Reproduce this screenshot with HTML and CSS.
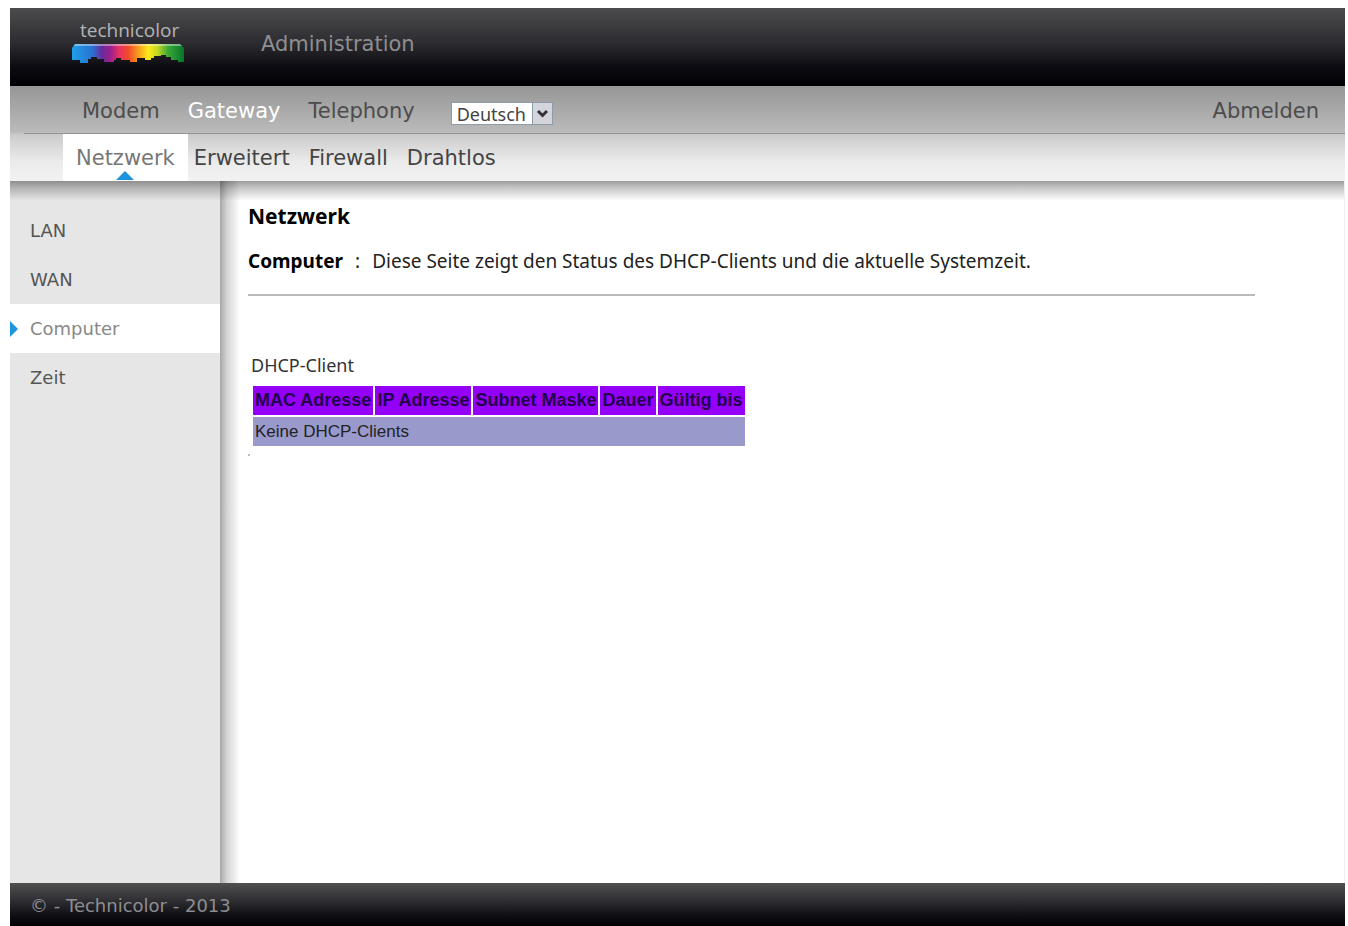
FILE: index.html
```html
<!DOCTYPE html>
<html lang="de">
<head>
    <meta charset="UTF-8">
    <meta name="viewport" content="width=device-width, initial-scale=1.0">
    <title>Technicolor - Netzwerk</title>
    <link rel="stylesheet" href="styles.css">
</head>
<body>
    <header class="header">
        <svg class="logo" width="116" height="50" viewBox="0 -6 116 50" role="img" aria-label="technicolor">
            <defs>
                <linearGradient id="rainbow">
                    <stop offset="0" stop-color="#1fa0e8"/>
                    <stop offset="0.18" stop-color="#2a72d0"/>
                    <stop offset="0.27" stop-color="#6a2a9c"/>
                    <stop offset="0.34" stop-color="#98208c"/>
                    <stop offset="0.42" stop-color="#e83068"/>
                    <stop offset="0.5" stop-color="#f04a28"/>
                    <stop offset="0.58" stop-color="#f89020"/>
                    <stop offset="0.68" stop-color="#fcea18"/>
                    <stop offset="0.76" stop-color="#c8d820"/>
                    <stop offset="0.86" stop-color="#38a838"/>
                    <stop offset="1" stop-color="#08742c"/>
                </linearGradient>
            </defs>
            <text class="logo-text" x="10" y="17">technicolor</text>
            <path fill="url(#rainbow)" d="M5 24H110L114 28V42H108V40H101V37H96V35H91V36H84V38H81V40H75V38H67V42H60V40H51V38H46V40H44V42H34V39H27V37H21V39H18V43H10V40H2V28Z"/>
            <path fill="#fff" opacity="0.4" d="M5 24H110L112 26H4Z"/>
        </svg>
        <span class="header-title">Administration</span>
    </header>

    <div class="nav">
        <nav class="main-nav">
            <a href="#">Modem</a>
            <a href="#" class="active">Gateway</a>
            <a href="#">Telephony</a>
            <div class="language">
                <select aria-label="Sprache">
                    <option>Deutsch</option>
                </select>
                <svg class="language-arrow" width="20" height="21" viewBox="0 0 20 21">
                    <rect width="20" height="21" fill="#d4d4dc"/>
                    <path d="M0 0V21" stroke="#8d9da8" stroke-width="2"/>
                    <path d="M6 8L10.500 12.500L15 8" fill="none" stroke="#333" stroke-width="3"/>
                </svg>
            </div>
            <a href="#" class="logout">Abmelden</a>
        </nav>
        <nav class="sub-nav">
            <a href="#" class="active">Netzwerk</a>
            <a href="#">Erweitert</a>
            <a href="#">Firewall</a>
            <a href="#">Drahtlos</a>
        </nav>
    </div>

    <div class="main">
        <nav class="sidebar">
            <a href="#">LAN</a>
            <a href="#">WAN</a>
            <a href="#" class="active">Computer</a>
            <a href="#">Zeit</a>
        </nav>
        <main class="content">
            <h1>Netzwerk</h1>
            <p class="description"><strong>Computer</strong><span class="colon">:</span>Diese Seite zeigt den Status des DHCP-Clients und die aktuelle Systemzeit.</p>
            <hr>
            <table class="clients">
                <caption>DHCP-Client</caption>
                <thead>
                    <tr>
                        <th>MAC Adresse</th>
                        <th>IP Adresse</th>
                        <th>Subnet Maske</th>
                        <th>Dauer</th>
                        <th>Gültig bis</th>
                    </tr>
                </thead>
                <tbody>
                    <tr>
                        <td colspan="5">Keine DHCP-Clients</td>
                    </tr>
                </tbody>
            </table>
            <div class="dot"></div>
        </main>
    </div>

    <footer class="footer">© - Technicolor - 2013</footer>
</body>
</html>
```

FILE: styles.css
```css
* {
    box-sizing: border-box;
}
body {
    font-family: "DejaVu Sans", Verdana, sans-serif;
    margin: 0;
    padding: 8px 3px 0 10px;
    display: flex;
    flex-direction: column;
    min-height: 100vh;
    background: #fff;
}
a {
    text-decoration: none;
}
.header {
    display: flex;
    align-items: center;
    height: 78px;
    padding-left: 60px;
    background: linear-gradient(#4c4c4e, #2c2c30 45%, #0c0c12 75%, #000004);
}
.logo {
    margin-bottom: 16px;
}
.logo-text {
    font-family: "Open Sans", sans-serif;
    font-size: 19px;
    fill: #b4b4b4;
}
.header-title {
    margin-left: 75px;
    margin-bottom: 6px;
    font-size: 21px;
    color: #8e8e90;
}
.nav {
    background: linear-gradient(#969696, #bababa 48%, #cccccc 52%, #ebebeb 80%, #f2f2f2);
}
.main-nav {
    display: flex;
    align-items: center;
    gap: 28px;
    height: 48px;
    margin-left: 14px;
    padding: 2px 26px 0 58px;
    border-bottom: 1px solid #929292;
    font-size: 21px;
}
.main-nav a {
    color: #4c4c4c;
}
.main-nav a.active {
    color: #fff;
}
.main-nav .logout {
    margin-left: auto;
}
.language {
    position: relative;
    display: flex;
    margin: 6px 0 0 8px;
}
.language select {
    appearance: none;
    width: 102px;
    height: 23px;
    padding: 0 0 0 5px;
    border: 1px solid #8d9da8;
    border-radius: 0;
    background: #fff;
    font-family: "Noto Sans", sans-serif;
    font-size: 18px;
    line-height: 20px;
    color: #444;
}
.language-arrow {
    position: absolute;
    top: 1px;
    right: 1px;
    pointer-events: none;
}
.sub-nav {
    display: flex;
    height: 47px;
    padding-left: 53px;
    font-size: 21px;
    line-height: 48px;
}
.sub-nav a {
    padding: 0 6px 0 13px;
    color: #444;
}
.sub-nav a.active {
    position: relative;
    margin-right: -7px;
    padding: 0 13px;
    background: #fff;
    color: #777;
}
.sub-nav a.active::after {
    content: "";
    position: absolute;
    left: 50%;
    bottom: 1px;
    margin-left: -9px;
    border: 9px solid transparent;
    border-top: 0;
    border-bottom-color: #1c94de;
}
.main {
    position: relative;
    display: flex;
    flex: 1;
    border-right: 1px solid #eee;
}
/* drop shadow under the navigation */
.main::before {
    content: "";
    position: absolute;
    top: 0;
    left: 0;
    right: 0;
    height: 20px;
    background: linear-gradient(rgba(0, 0, 0, 0.38), rgba(0, 0, 0, 0.22) 35%, rgba(0, 0, 0, 0));
}
.sidebar {
    width: 210px;
    padding-top: 25px;
    background: #e6e6e6;
}
.sidebar a {
    display: block;
    height: 49px;
    padding-left: 20px;
    font-size: 18px;
    line-height: 50px;
    color: #555;
}
.sidebar a.active {
    position: relative;
    background: #fff;
    color: #888;
}
.sidebar a.active::before {
    content: "";
    position: absolute;
    left: 0;
    top: 17px;
    border: 8px solid transparent;
    border-right: 0;
    border-left-color: #1c94de;
}
.content {
    flex: 1;
    padding: 20px 89px 20px 28px;
    background: linear-gradient(to right, #a8a8a8, #d4d4d4 7px, #fff 20px);
    font-family: "Noto Sans", sans-serif;
    font-size: 19px;
}
.content h1 {
    margin: 0;
    font-size: 21px;
    line-height: 30px;
}
.description {
    margin: 16px 0 0;
    line-height: 28px;
    color: #222;
}
.description strong {
    color: #000;
}
.colon {
    margin: 0 12px;
}
.content hr {
    margin: 19px 0 0;
    border: 0;
    border-top: 2px solid #bbb;
}
.clients {
    margin: 55px 0 0 3px;
    border-spacing: 2px;
    font-family: "Liberation Sans", Arial, sans-serif;
    font-size: 17px;
    line-height: 29px;
}
.clients caption {
    padding-bottom: 4px;
    font-family: "Noto Sans", sans-serif;
    font-size: 18px;
    text-align: left;
    color: #333;
}
.clients th {
    padding: 0 2px;
    background: #9400f8;
    font-size: 18px;
    color: #24004c;
}
.clients td {
    padding: 0 2px;
    background: #9999cc;
    color: #222;
}
.dot {
    width: 2px;
    height: 2px;
    margin-top: 6px;
    background: #bbb;
}
.footer {
    height: 43px;
    padding-left: 20px;
    background: linear-gradient(#505050, #343438 35%, #141418 70%, #000004);
    font-size: 18px;
    line-height: 46px;
    color: #8e8e90;
}
```
